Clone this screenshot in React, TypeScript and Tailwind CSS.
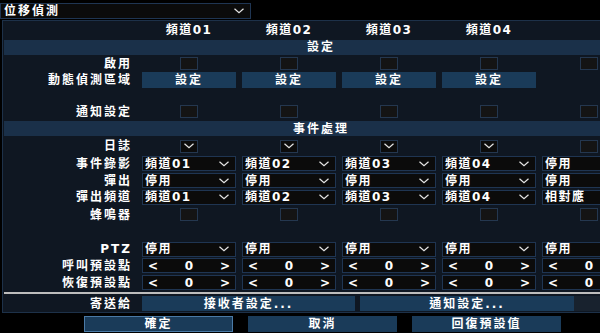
import React from "react";

const FONT = { fontFamily: '"DejaVu Sans", "Noto Sans CJK TC", sans-serif' };

function Chevron({ className = "" }: { className?: string }) {
  return (
    <svg width="10" height="6" viewBox="0 0 10 6" className={className}>
      <polyline points="0.5,0.8 5,4.8 9.5,0.8" fill="none" stroke="#e6e6e6" strokeWidth="1.2" />
    </svg>
  );
}

function Checkbox() {
  return <div className="w-[18px] h-[13px] bg-[#141414] border border-[#24374f]" />;
}

function SmallDrop() {
  return (
    <div className="w-[18px] h-[13px] bg-[#0c0c0c] border border-[#24374f] flex items-center justify-center">
      <Chevron />
    </div>
  );
}

function Select({ value }: { value: string }) {
  return (
    <div className="w-[94px] h-[15px] bg-[#0b0b0b] border border-[#1f3552] flex items-center justify-between pl-[2px] pr-[6px] text-[12px] font-bold tracking-[1.5px] text-white leading-none">
      <span>{value}</span>
      <Chevron />
    </div>
  );
}

function Spinner() {
  return (
    <div className="w-[94px] h-[15px] bg-[#0b0b0b] border border-[#1f3552] flex items-center justify-between pl-[5px] pr-[5px] text-[12px] font-bold text-white leading-none">
      <span>&lt;</span>
      <span>0</span>
      <span>&gt;</span>
    </div>
  );
}

function Btn({ label }: { label: string }) {
  return (
    <div className="w-[94px] h-[16px] bg-[#1a3b59] flex items-center justify-center text-[12px] font-bold tracking-[2px] text-white leading-none">
      {label}
    </div>
  );
}

function Row({
  label,
  h,
  cells,
}: {
  label: string;
  h: string;
  cells: React.ReactNode[];
}) {
  return (
    <div className={`flex items-center ${h}`}>
      <div className="w-[138px] shrink-0 text-right pr-[10px] text-[12px] font-bold tracking-[2px] text-white leading-none">
        {label}
      </div>
      <div className="flex gap-[6px]">
        {cells.map((c, i) => (
          <div key={i} className="w-[94px] shrink-0 flex items-center justify-center">
            {c}
          </div>
        ))}
      </div>
    </div>
  );
}

function Bar({ label }: { label: string }) {
  return (
    <div className="h-[15px] w-[634px] bg-[#1a3049] flex items-center justify-center text-[12px] font-bold tracking-[2px] text-white leading-none">
      {label}
    </div>
  );
}

export default function App() {
  const five = (n: React.ReactNode) => [n, n, n, n, n];
  return (
    <div className="w-[600px] h-[333px] bg-black overflow-hidden relative" style={FONT}>
      {/* top dropdown */}
      <div className="pt-[3px] pl-0">
        <div className="w-[251px] h-[16px] bg-[#0b0b0b] border border-[#1f3552] flex items-center justify-between pl-[3px] pr-[6px] text-[12px] font-bold tracking-[2px] text-white leading-none">
          <span>位移偵測</span>
          <Chevron />
        </div>
      </div>
      {/* panel */}
      <div className="ml-[2px] mt-[1px] w-[660px] h-[293px] bg-[#0f1722] border border-[#1d3149] pl-[1px] flex flex-col">
        <div className="flex items-center h-[19px]">
          <div className="w-[138px] shrink-0" />
          <div className="flex gap-[6px] text-[12px] font-bold tracking-[1.5px] text-white leading-none">
            {["頻道01", "頻道02", "頻道03", "頻道04", ""].map((t, i) => (
              <div key={i} className="w-[94px] text-center">{t}</div>
            ))}
          </div>
        </div>
        <Bar label="設定" />
        <Row label="啟用" h="h-[16px] mt-[1px]" cells={five(<Checkbox />)} />
        <Row
          label="動態偵測區域"
          h="h-[16px]"
          cells={[<Btn label="設定" />, <Btn label="設定" />, <Btn label="設定" />, <Btn label="設定" />, null]}
        />
        <div className="h-[16px]" />
        <Row label="通知設定" h="h-[17px]" cells={five(<Checkbox />)} />
        <div className="mt-[1px]">
          <Bar label="事件處理" />
        </div>
        <Row
          label="日誌"
          h="h-[18px] mt-[1px]"
          cells={[<SmallDrop />, <SmallDrop />, <SmallDrop />, <SmallDrop />, <Checkbox />]}
        />
        <Row
          label="事件錄影"
          h="h-[17px]"
          cells={[
            <Select value="頻道01" />,
            <Select value="頻道02" />,
            <Select value="頻道03" />,
            <Select value="頻道04" />,
            <Select value="停用" />,
          ]}
        />
        <Row label="彈出" h="h-[17px]" cells={five(<Select value="停用" />)} />
        <Row
          label="彈出頻道"
          h="h-[17px]"
          cells={[
            <Select value="頻道01" />,
            <Select value="頻道02" />,
            <Select value="頻道03" />,
            <Select value="頻道04" />,
            <Select value="相對應" />,
          ]}
        />
        <Row label="蜂鳴器" h="h-[18px]" cells={five(<Checkbox />)} />
        <div className="h-[17px]" />
        <Row label="PTZ" h="h-[17px]" cells={five(<Select value="停用" />)} />
        <Row label="呼叫預設點" h="h-[17px]" cells={five(<Spinner />)} />
        <Row label="恢復預設點" h="h-[17px]" cells={five(<Spinner />)} />
        <div className="h-[2px] bg-[#bdbdbd] mt-[1px]" />
        <div className="flex items-center h-[17px] mt-[1px]">
          <div className="w-[138px] shrink-0 text-right pr-[10px] text-[12px] font-bold tracking-[2px] text-white leading-none">
            寄送給
          </div>
          <div className="flex gap-[5px]">
            <div className="w-[213px] h-[15px] bg-[#1a3b59] flex items-center justify-center text-[12px] font-bold tracking-[2px] text-white leading-none">
              接收者設定...
            </div>
            <div className="w-[214px] h-[15px] bg-[#1a3b59] flex items-center justify-center text-[12px] font-bold tracking-[2px] text-white leading-none">
              通知設定...
            </div>
            <div className="w-[60px] h-[15px] bg-[#18222e] -ml-[5px]" />
          </div>
        </div>
      </div>
      {/* bottom buttons */}
      <div className="flex gap-[15px] pl-[84px] mt-[3px]">
        <div className="w-[149px] h-[16px] bg-[#1a3b59] border border-[#4a7aa6] flex items-center justify-center text-[12px] font-bold tracking-[2px] text-white leading-none">
          確定
        </div>
        <div className="w-[149px] h-[16px] bg-[#1a3b59] flex items-center justify-center text-[12px] font-bold tracking-[2px] text-white leading-none">
          取消
        </div>
        <div className="w-[149px] h-[16px] bg-[#1a3b59] flex items-center justify-center text-[12px] font-bold tracking-[2px] text-white leading-none">
          回復預設值
        </div>
      </div>
    </div>
  );
}
